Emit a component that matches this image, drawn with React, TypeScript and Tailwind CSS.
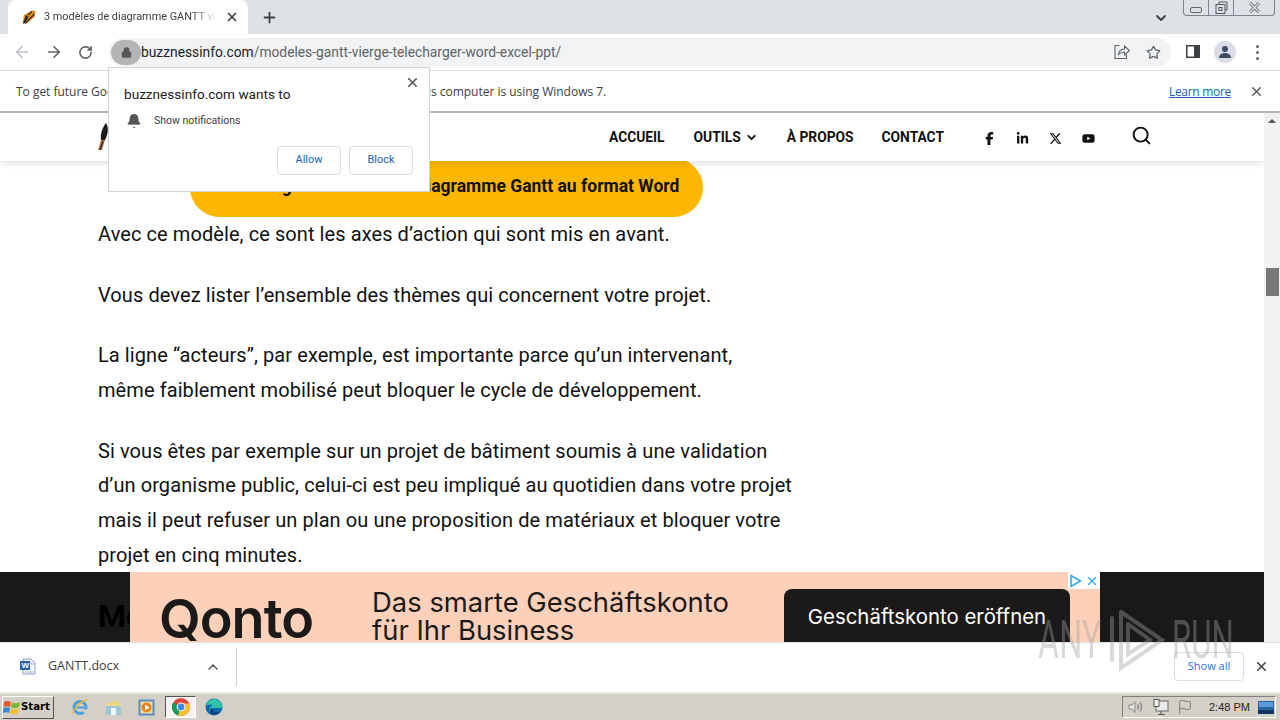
import React from 'react'
import { ArrowLeft, ArrowRight, RotateCw, Lock, X, Plus, ChevronDown, ChevronUp, Star, Bell, Search, Flag } from 'lucide-react'
import { FaFacebookF, FaLinkedinIn, FaXTwitter, FaYoutube } from 'react-icons/fa6'

const ui = "font-['Open_Sans',sans-serif]"

const ChromeIcon = () => (
  <svg width="20" height="20" viewBox="0 0 20 20">
    <circle cx="10" cy="10" r="9" fill="#db4437" />
    <path d="M10 10 L2.2 5.5 A9 9 0 0 0 7 18.5 Z" fill="#0f9d58" />
    <path d="M10 6 L18.4 6.8 A9 9 0 0 1 7 18.5 L10 10 Z" fill="#fbc02d" />
    <circle cx="10" cy="10" r="4.4" fill="#fff" />
    <circle cx="10" cy="10" r="3.4" fill="#4285f4" />
  </svg>
)

const EdgeIcon = () => (
  <svg width="18" height="18" viewBox="0 0 18 18">
    <circle cx="9" cy="9" r="8.5" fill="#0c63b0" />
    <path d="M1 8 C2 2 8 0 12 1.5 C16 3 17.5 7 17 10 L7 10 C7 13 11 15 15 13.5 C13 17 8 18 5 15.5 C3 13 4 9 8 7 C5 6.5 2.5 7 1 8 Z" fill="#2fc4a8" />
    <path d="M7 10 C7 13 11 15 15 13.5 C13 17 8 18 5 15.5 C4 14 4.5 11 7 10 Z" fill="#0b3f86" />
  </svg>
)

const IeIcon = () => (
  <svg width="18" height="18" viewBox="0 0 18 18">
    <circle cx="9" cy="9.5" r="6" fill="none" stroke="#4a9fdc" strokeWidth="3" />
    <path d="M5 9.5 H14" stroke="#4a9fdc" strokeWidth="2" />
    <path d="M12 13 H16" stroke="#d4d0c8" strokeWidth="3" />
    <path d="M1.5 16 C3 10 10 3 16.5 1.5" fill="none" stroke="#e8b83a" strokeWidth="1.4" />
  </svg>
)

const FolderIcon = () => (
  <svg width="17" height="18" viewBox="0 0 17 18">
    <path d="M1 5 H6 L7 3 H14 V7 H1 Z" fill="#e9d27c" />
    <rect x="1" y="6" width="15" height="11" fill="#9cc7d8" />
    <rect x="6" y="10" width="5" height="7" fill="#f0f4f6" />
    <rect x="1" y="6" width="15" height="2" fill="#ecd98f" />
  </svg>
)

const PlayerIcon = () => (
  <svg width="17" height="17" viewBox="0 0 17 17">
    <rect x="0.5" y="0.5" width="16" height="16" fill="#5b8dc0" />
    <rect x="2.5" y="2.5" width="12" height="12" fill="#f6d9a8" />
    <circle cx="8.5" cy="8.5" r="5" fill="#e8871f" />
    <path d="M7 5.8 L11.5 8.5 L7 11.2 Z" fill="#fff" />
  </svg>
)

const WordIcon = () => (
  <svg width="17" height="17" viewBox="0 0 17 17">
    <path d="M4 1 H12 L16 5 V16 H4 Z" fill="#f4f7fb" stroke="#8aa0bd" />
    <rect x="1" y="3" width="10" height="9" fill="#2b5fb0" />
    <text x="2.4" y="10.4" fontSize="8" fontWeight="700" fill="#fff" fontFamily="Liberation Sans, sans-serif">W</text>
    <path d="M6 14 H14 M12 4 V6 H15" stroke="#9fb4cf" fill="none" />
  </svg>
)

const Favicon = () => (
  <svg width="14" height="14" viewBox="0 0 14 14">
    <path d="M0.5 13.5 L2 5 L10 0.5 L13.5 1 L12.5 7 L6 12.5 Z" fill="#e08a22" />
    <path d="M1 13.5 L4 5 L6.5 7 L3 13 Z" fill="#2b2420" />
    <path d="M3 13.5 L12.5 4 M6 5 L10 1.5" stroke="#3a2a1c" strokeWidth="1.2" />
  </svg>
)

const LogoFeather = () => (
  <svg width="12" height="28" viewBox="0 0 12 28">
    <path d="M8 0 C11 4 10 12 7 17 L3 17 C2 10 5 4 8 0 Z" fill="#1d1a18" />
    <path d="M3 17 L7 17 L4 27 L0 27 Z" fill="#b5764a" />
    <path d="M5 18 L2 27" stroke="#2a1e16" strokeWidth="1.2" />
  </svg>
)

const WinFlag = () => (
  <svg width="18" height="17" viewBox="0 0 18 17">
    <path d="M1 3 C3 1.5 5 1.8 8 3 L7 8 C5 7 3 7 0.5 8 Z" fill="#e2582a" />
    <path d="M9 3.4 C11 4.5 14 4.5 17 3 L16 8 C13 9.5 10.5 9.5 8 8.5 Z" fill="#7db83a" />
    <path d="M0.3 9 C3 8 5 8 7 9 L6 14 C4 13 2 13 0 14 Z" fill="#3a87d6" />
    <path d="M8 9.6 C10 10.6 13 10.6 15.8 9.2 L15 14.5 C12 15.5 9 15.5 7 14.6 Z" fill="#f2c12e" />
  </svg>
)

const ShareIcon = () => (
  <svg width="16" height="16" viewBox="0 0 16 16" fill="none" stroke="#5f6368" strokeWidth="1.1">
    <path d="M5.5 1.5 H1 V14.5 H12.5 V10.5" />
    <path d="M4.5 10.5 C5 7 7.5 5 10.5 5 V2 L15.5 6.5 L10.5 11 V8 C8 8 6 8.8 4.5 10.5 Z" />
  </svg>
)

const SideIcon = () => (
  <svg width="14" height="14" viewBox="0 0 14 14">
    <rect x="0" y="0" width="14" height="13" fill="#3c4043" />
    <rect x="1.5" y="1.5" width="6.5" height="10" fill="#fff" />
  </svg>
)

const Avatar = () => (
  <div className="flex h-[22px] w-[22px] items-center justify-center rounded-full bg-[#dadce6]">
    <svg width="14" height="14" viewBox="0 0 14 14" fill="#3f4a63">
      <circle cx="7" cy="4" r="3" />
      <path d="M1 13 C1 9.5 4 8 7 8 C10 8 13 9.5 13 13 Z" />
    </svg>
  </div>
)

const Speaker = () => (
  <svg width="18" height="16" viewBox="0 0 18 16" fill="none" stroke="#8a8a8a">
    <path d="M2 6 H5 L8 2.5 V13.5 L5 10 H2 Z" fill="#e6e6e6" />
    <path d="M10.5 5.5 C11.5 7 11.5 9 10.5 10.5 M13 3.5 C15 6.5 15 9.5 13 12.5" strokeWidth="1.4" />
  </svg>
)

const Network = () => (
  <svg width="17" height="17" viewBox="0 0 17 17">
    <rect x="3" y="2" width="12" height="10" fill="#e9e9e9" stroke="#666" />
    <rect x="1" y="0.5" width="5" height="7" fill="#fff" stroke="#555" />
    <path d="M8 12 V15 M5 15.5 H12" stroke="#555" />
  </svg>
)

const Desktop = () => (
  <svg width="16" height="13" viewBox="0 0 16 13">
    <rect width="16" height="13" fill="#2a63a8" />
    <rect y="9" width="16" height="4" fill="#13365f" />
    <rect x="1" y="1" width="14" height="5" fill="#5c9bd8" />
  </svg>
)

const Paragraph = ({ lines }: { lines: string[] }) => (
  <p className="mb-[25.8px]">
    {lines.map((l) => (
      <span key={l} className="block whitespace-nowrap">{l}</span>
    ))}
  </p>
)

export default function App() {
  return (
    <div className={`relative flex h-[720px] w-[1280px] flex-col overflow-hidden bg-white ${ui}`}>
      {/* tab strip */}
      <div className="flex h-[34px] shrink-0 items-center bg-[#dee1e6]">
        <div className="ml-2 flex h-[34px] w-[240px] items-center rounded-t-lg bg-white pl-[14px] pr-[9px]">
          <Favicon />
          <span className="ml-2 w-[173px] overflow-hidden whitespace-nowrap font-['Roboto',sans-serif] text-[10.9px] text-[#3c4043] [mask-image:linear-gradient(to_right,black_85%,transparent)]">3 modèles de diagramme GANTT vierge à télécharger</span>
          <X size={14} strokeWidth={3} className="ml-auto text-[#444]" />
        </div>
        <Plus size={17} strokeWidth={2.5} className="ml-[13px] text-[#3c4043]" />
        <div className="flex-1" />
        <ChevronDown size={16} strokeWidth={2.8} className="mr-[14px] mt-[1px] text-[#3c4043]" />
        <div className="mb-[18px] mr-[5px] flex h-[16px] w-[92px] rounded-b-[4px] border border-t-0 border-[#7a8590]">
          <div className="flex w-[25px] items-end justify-center border-r border-[#7a8590] pb-[2px]">
            <div className="h-[6px] w-[12px] rounded-[2px] border border-[#666]" />
          </div>
          <div className="flex w-[25px] items-center justify-center border-r border-[#7a8590]">
            <svg width="13" height="14" viewBox="0 0 13 14" fill="none" stroke="#555">
              <path d="M4 3 V1 H12 V9 H10" />
              <rect x="1" y="3.5" width="9" height="9" />
              <rect x="4" y="6.5" width="3" height="3" />
            </svg>
          </div>
          <div className="flex flex-1 items-center justify-center">
            <svg width="13" height="11" viewBox="0 0 13 11" fill="none">
              <path d="M2 1 L11 10 M11 1 L2 10" stroke="#666" strokeWidth="3" />
              <path d="M2 1 L11 10 M11 1 L2 10" stroke="#e8eaed" strokeWidth="1.2" />
            </svg>
          </div>
        </div>
      </div>

      {/* toolbar */}
      <div className="flex h-[37px] shrink-0 items-center border-b border-[#dadce0] bg-white">
        <ArrowLeft size={18} strokeWidth={2.3} className="ml-[13px] text-[#bdc1c6]" />
        <ArrowRight size={18} strokeWidth={2.3} className="ml-[14px] text-[#5f6368]" />
        <RotateCw size={15} strokeWidth={2.6} className="ml-[15px] text-[#5f6368]" />
        <div className="ml-[16px] flex h-[29px] w-[1062px] items-center rounded-full bg-[#f1f3f4] pl-[2px] pr-[10px]">
          <div className="flex h-[25px] w-[30px] items-center justify-center rounded-full bg-[#b5b5b5]">
            <Lock size={11} fill="#555" strokeWidth={2.5} className="text-[#555]" />
          </div>
          <span className="whitespace-nowrap font-['Roboto',sans-serif] text-[13.8px] text-[#202124]">buzznessinfo.com<span className="text-[#5f6368]">/modeles-gantt-vierge-telecharger-word-excel-ppt/</span></span>
          <div className="flex-1" />
          <ShareIcon />
          <Star size={15} strokeWidth={2} className="ml-[16px] text-[#5f6368]" />
        </div>
        <div className="ml-[15px]"><SideIcon /></div>
        <div className="ml-[14px]"><Avatar /></div>
        <div className="ml-[20px] flex flex-col gap-[3px]">
          <span className="h-[3px] w-[3px] rounded-full bg-[#5f6368]" />
          <span className="h-[3px] w-[3px] rounded-full bg-[#5f6368]" />
          <span className="h-[3px] w-[3px] rounded-full bg-[#5f6368]" />
        </div>
      </div>

      {/* unsupported OS bar */}
      <div className="flex h-[42px] shrink-0 items-center border-b-2 border-[#b4b4b4] bg-white pl-4 pr-[16px] pt-[1px] text-[12px] text-[#3c4043]">
        <span className="whitespace-nowrap tracking-[-0.02px]">To get future Google Chrome updates, you'll need Windows 10 or later. This computer is using Windows 7.</span>
        <span className="ml-auto tracking-[-0.3px] text-[#1a5fb4] underline">Learn more</span>
        <X size={15} strokeWidth={2.5} className="ml-[18px] text-[#5f6368]" />
      </div>

      {/* page viewport */}
      <div className="relative flex min-h-0 flex-1">
        <div className="relative min-w-0 flex-1 overflow-hidden">
          <header className="relative z-10 flex h-[48px] items-center bg-white pl-[98px] pr-[112px] font-['Roboto',sans-serif] text-[13.8px] font-bold text-[#111] shadow-[0_3px_6px_rgba(0,0,0,0.1)]">
            <div className="mr-auto"><LogoFeather /></div>
            <span>ACCUEIL</span>
            <span className="ml-[29px] flex items-center">OUTILS<ChevronDown size={13} strokeWidth={3.5} className="ml-[4px]" /></span>
            <span className="ml-[29px]">À PROPOS</span>
            <span className="ml-[28px]">CONTACT</span>
            <div className="ml-[39px] mt-[2px] flex w-[112px] items-center gap-[20px] text-[13px]">
              <FaFacebookF />
              <FaLinkedinIn />
              <FaXTwitter />
              <FaYoutube />
            </div>
            <Search size={21} strokeWidth={2.2} className="mb-[3px] ml-[36px]" />
          </header>
          <main className="pl-[98px] font-['Roboto',sans-serif] text-[20px] leading-[34.8px] tracking-[0.08px] text-[#111]">
            <div className="-mt-[3px] ml-[92px] flex h-[59px] w-[513px] items-center justify-center rounded-[30px] bg-[#fdb700] pb-[2px] text-[17.5px] font-bold tracking-normal">
              Télécharger le modèle de diagramme Gantt au format Word
            </div>
            <Paragraph lines={['Avec ce modèle, ce sont les axes d’action qui sont mis en avant.']} />
            <Paragraph lines={['Vous devez lister l’ensemble des thèmes qui concernent votre projet.']} />
            <Paragraph lines={['La ligne “acteurs”, par exemple, est importante parce qu’un intervenant,', 'même faiblement mobilisé peut bloquer le cycle de développement.']} />
            <Paragraph lines={['Si vous êtes par exemple sur un projet de bâtiment soumis à une validation', 'd’un organisme public, celui-ci est peu impliqué au quotidien dans votre projet', 'mais il peut refuser un plan ou une proposition de matériaux et bloquer votre', 'projet en cinq minutes.']} />
            <h2 className="mt-[25px] text-[32px] font-bold text-black">Modèle 3</h2>
          </main>

          {/* sticky ad */}
          <div className="absolute bottom-0 left-0 right-0 z-20 flex h-[70px] justify-center overflow-hidden bg-black/90">
            <div className="relative ml-[-34px] flex h-[90px] w-[970px] items-start bg-[#fdd1b9] font-['Inter',sans-serif] text-[#1c1a18]">
              <span className="ml-[29px] mt-[17px] text-[54px] font-semibold leading-[60px] tracking-[-1px]">Qonto</span>
              <div className="ml-[59px] mt-[16px] text-[27.4px] leading-[28px]">
                <div>Das smarte Geschäftskonto</div>
                <div>für Ihr Business</div>
              </div>
              <div className="absolute right-[30px] top-[17px] flex h-[60px] w-[286px] items-center justify-center rounded-lg bg-[#1c1a18] pb-[4px] text-[20.4px] text-white">Geschäftskonto eröffnen</div>
              <div className="absolute right-0 top-0 flex h-[17px] w-[32px] items-center justify-center gap-[3px] bg-white">
                <svg width="13" height="14" viewBox="0 0 13 14" fill="none" stroke="#29abe2" strokeWidth="1.5"><path d="M2 1.5 L11.5 7 L2 12.5 Z" /></svg>
                <X size={14} strokeWidth={2} className="text-[#29abe2]" />
              </div>
            </div>
          </div>
        </div>
        {/* scrollbar */}
        <div className="relative flex w-[16px] shrink-0 flex-col items-center bg-[#f1f1f1]">
          <div className="mt-[6px] h-0 w-0 border-x-[4px] border-b-[4px] border-x-transparent border-b-[#505050]" />
          <div className="mt-[145px] h-[28px] w-[13px] bg-[#787878]" />
        </div>
      </div>

      {/* download shelf */}
      <div className="flex h-[50px] shrink-0 items-center border-t border-[#e0e0e0] bg-white pb-[2px]">
        <div className="ml-[19px]"><WordIcon /></div>
        <span className="ml-[12px] text-[12.5px] text-[#3c4043]">GANTT.docx</span>
        <ChevronUp size={16} strokeWidth={2.5} className="ml-[86px] text-[#5f6368]" />
        <div className="ml-[15px] h-[38px] w-px bg-[#d0d0d0]" />
        <div className="flex-1" />
        <div className="flex h-[29px] w-[70px] items-center justify-center rounded-[4px] border border-[#dadce0] text-[11px] text-[#1a73e8]">Show all</div>
        <X size={15} strokeWidth={2.5} className="ml-[10px] mr-[11px] text-[#444]" />
      </div>

      {/* windows taskbar */}
      <div className="flex h-[28px] shrink-0 items-center border-t-2 border-[#e9e7e2] bg-[#d4d0c8]">
        <div className="ml-[2px] flex h-[23px] w-[52px] items-center border border-b-[#555] border-l-white border-r-[#555] border-t-white font-['DejaVu_Sans',sans-serif] text-[10.2px] font-bold text-black">
          <WinFlag />
          <span>Start</span>
        </div>
        <div className="ml-[17px]"><IeIcon /></div>
        <div className="ml-[16px]"><FolderIcon /></div>
        <div className="ml-[16px]"><PlayerIcon /></div>
        <div className="ml-[10px] flex h-[22px] w-[31px] items-center justify-center border border-b-white border-l-[#555] border-r-white border-t-[#555] bg-[#f4f3f0]"><ChromeIcon /></div>
        <div className="ml-[9px]"><EdgeIcon /></div>
        <div className="flex-1" />
        <div className="mr-[4px] flex h-[22px] w-[154px] items-center border border-b-white border-l-[#808080] border-r-white border-t-[#808080] pl-[4px] font-['Liberation_Sans',sans-serif] text-[11px] text-[#222]">
          <Speaker />
          <div className="ml-[8px]"><Network /></div>
          <Flag size={16} strokeWidth={1.2} className="ml-[7px] text-[#666]" />
          <span className="ml-[16px] whitespace-nowrap">2:48 PM</span>
          <div className="ml-auto mr-[1px]"><Desktop /></div>
        </div>
      </div>

      {/* permission popup */}
      <div className="absolute left-[108px] top-[67px] z-30 h-[125px] w-[322px] border border-[#d4d4d4] bg-white font-['Roboto',sans-serif]">
        <X size={15} strokeWidth={2.5} className="absolute right-[9px] top-[7px] text-[#555]" />
        <div className="ml-[15px] mt-[16px] text-[13.6px] leading-[20px] text-[#202124]">buzznessinfo.com wants to</div>
        <div className="ml-[17px] mt-[9px] flex items-center text-[10.5px] text-[#3c4043]">
          <Bell size={16} fill="#555" strokeWidth={1} className="text-[#555]" />
          <span className="ml-[12px]">Show notifications</span>
        </div>
        <div className="mr-[16px] mt-[17px] flex justify-end gap-2 text-[11px] text-[#1a5fb4]">
          <div className="flex h-[29px] w-[64px] items-center justify-center rounded-[4px] border border-[#dadce0]">Allow</div>
          <div className="flex h-[29px] w-[64px] items-center justify-center rounded-[4px] border border-[#dadce0]">Block</div>
        </div>
      </div>

      {/* watermark */}
      <div className="pointer-events-none absolute left-[1038px] top-[608px] z-40 flex items-center font-['Roboto',sans-serif] text-[54px] leading-[64px] text-[#a0a0a0]/40">
        <span className="w-[70px] origin-left scale-x-[0.6]">ANY</span>
        <svg width="58" height="64" viewBox="0 0 58 64" fill="none" stroke="#a0a0a0" strokeOpacity="0.4" strokeWidth="4" strokeLinecap="round">
          <path d="M4 10 V52 M13 4 V60 L54 32 L13 4 M20 16 V46 L42 32 L20 16" />
        </svg>
        <span className="ml-[6px] origin-left scale-x-[0.58]">RUN</span>
      </div>
    </div>
  )
}
